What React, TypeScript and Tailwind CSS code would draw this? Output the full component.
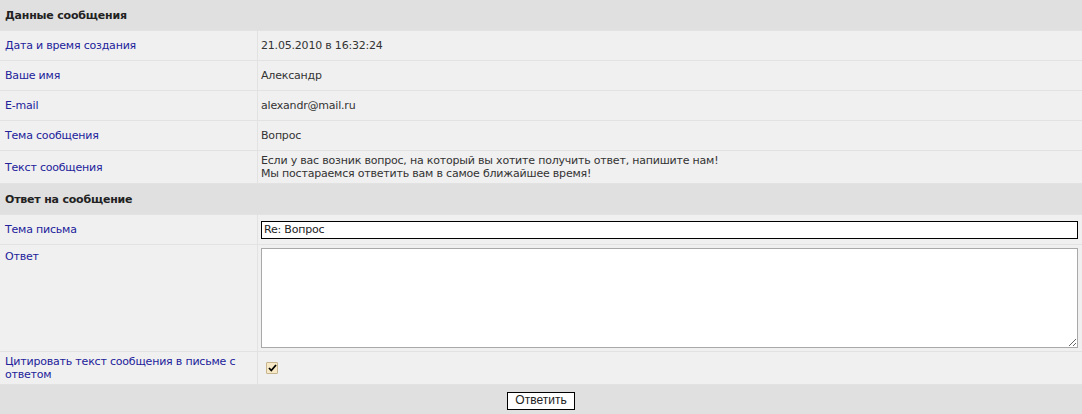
import { Fragment } from 'react';

const font = "font-['DejaVu_Sans',Tahoma,sans-serif]";

type Row = { label: string; value: React.ReactNode };

const Label = ({ children, h = 'h-[29px]' }: { children: React.ReactNode; h?: string }) => (
    <div className={`bg-[#f0f0f0] px-[5px] flex items-center text-[#22229b] ${h}`}>{children}</div>
);

const Value = ({ children, h = 'h-[29px]' }: { children: React.ReactNode; h?: string }) => (
    <div className={`bg-[#f0f0f0] px-[3px] flex items-center text-[#333] ${h}`}>{children}</div>
);

const Header = ({ children }: { children: React.ReactNode }) => (
    <div className="col-span-2 bg-[#e0e0e0] h-[30px] px-[5px] flex items-center font-bold text-[#222]">
        {children}
    </div>
);

const App = () => {
    const info: Row[] = [
        { label: 'Дата и время создания', value: '21.05.2010 в 16:32:24' },
        { label: 'Ваше имя', value: 'Александр' },
        { label: 'E-mail', value: 'alexandr@mail.ru' },
        { label: 'Тема сообщения', value: 'Вопрос' },
    ];

    return (
        <div className={`${font} text-[11px] leading-[13px] tracking-[-0.2px] w-[1082px] h-[414px] bg-[#e0e0e0]`}>
            <div className="grid grid-cols-[257px_1fr] gap-px bg-[#e2e2e2]">
                <Header>Данные сообщения</Header>
                {info.map((r) => (
                    <Fragment key={r.label}>
                        <Label>{r.label}</Label>
                        <Value>{r.value}</Value>
                    </Fragment>
                ))}
                <Label h="h-[32px]">Текст сообщения</Label>
                <Value h="h-[32px]">
                    <span>
                        Если у вас возник вопрос, на который вы хотите получить ответ, напишите нам!
                        <br />
                        Мы постараемся ответить вам в самое ближайшее время!
                    </span>
                </Value>

                <Header>Ответ на сообщение</Header>
                <Label>Тема письма</Label>
                <div className="bg-[#f0f0f0] h-[29px] flex items-center pl-[3px] pr-[4px]">
                    <input
                        defaultValue="Re: Вопрос"
                        className="w-full h-[18px] border border-black bg-white px-[2px] text-[#222] outline-none"
                    />
                </div>
                <div className="bg-[#f0f0f0] h-[106px] px-[5px] pt-[5px] text-[#22229b]">Ответ</div>
                <div className="bg-[#f0f0f0] h-[106px] pl-[3px] pr-[4px] pt-[3px]">
                    <textarea className="block w-full h-[100px] border border-[#a9a9a9] bg-white outline-none" />
                </div>
                <Label h="h-[32px]">
                    <span>Цитировать текст сообщения в письме с ответом</span>
                </Label>
                <div className="bg-[#f0f0f0] h-[32px] flex items-center pl-[8px]">
                    <span className="w-[12px] h-[12px] border border-[#c7b58f] bg-[#f7e9c6] rounded-[1px] flex items-center justify-center">
                        <svg width="9" height="8" viewBox="0 0 9 8">
                            <path d="M1 4 L3.3 6.5 L8 1" fill="none" stroke="#000" strokeWidth="1.8" />
                        </svg>
                    </span>
                </div>
                <div className="col-span-2 bg-[#e0e0e0] h-[30px] flex items-center justify-center">
                    <button className="h-[18px] px-[7px] border border-black bg-white text-[12px] text-[#222] tracking-normal font-['Liberation_Sans',Arial,sans-serif] mt-[1px]">
                        Ответить
                    </button>
                </div>
            </div>
        </div>
    );
};

export default App;
